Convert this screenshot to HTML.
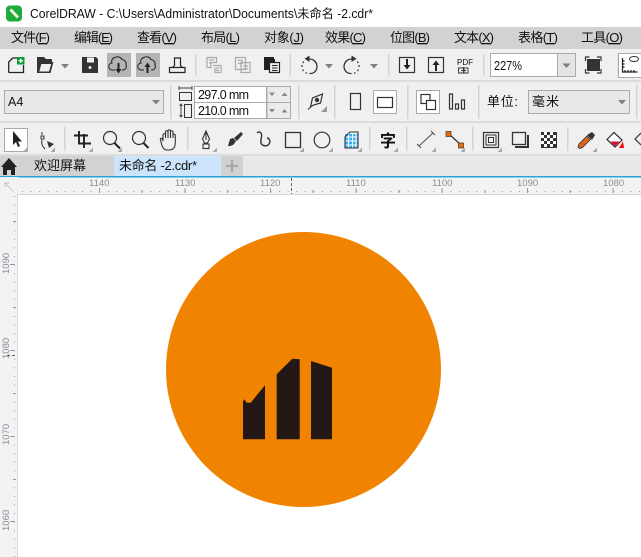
<!DOCTYPE html>
<html><head><meta charset="utf-8"><style>
html,body{margin:0;padding:0;background:#fff;width:641px;height:557px;overflow:hidden}
svg{display:block;position:absolute;left:0;top:0}
text{font-family:"Liberation Sans","Noto Sans CJK SC",sans-serif;fill:#111}
.m{font-size:13px}
.r{font-size:9.5px;fill:#8d8d8d}
.rv{font-size:9.5px;fill:#8a8a9c}
.i{fill:none;stroke:#333;stroke-width:1.3}
.g{fill:none;stroke:#aaa;stroke-width:1.2}
.sep{fill:#d4d4d4}
.tri{fill:#808080}
.c{fill:#a8a8a8}
</style></head><body>
<svg width="641" height="557" viewBox="0 0 641 557" xmlns="http://www.w3.org/2000/svg">
<rect width="641" height="557" fill="#fff"/>
<!-- title -->
<rect x="6" y="5.500" width="16" height="16" rx="4" fill="#1faa3c"/>
<path d="M10.500 9.500l7.500 8" stroke="#e8f5e0" stroke-width="3"/>
<text x="30" y="18" font-size="12.500" textLength="343" lengthAdjust="spacingAndGlyphs">CorelDRAW - C:\Users\Administrator\Documents\未命名 -2.cdr*</text>
<!-- menu -->
<rect y="27" width="641" height="22" fill="#d2d2d2"/>
<g class="m">
<text class="m" x="11" y="42" textLength="39">文件(<tspan text-decoration="underline">F</tspan>)</text>
<text class="m" x="74" y="42" textLength="39">编辑(<tspan text-decoration="underline">E</tspan>)</text>
<text class="m" x="137" y="42" textLength="40">查看(<tspan text-decoration="underline">V</tspan>)</text>
<text class="m" x="201" y="42" textLength="39">布局(<tspan text-decoration="underline">L</tspan>)</text>
<text class="m" x="264" y="42" textLength="40">对象(<tspan text-decoration="underline">J</tspan>)</text>
<text class="m" x="325" y="42" textLength="41">效果(<tspan text-decoration="underline">C</tspan>)</text>
<text class="m" x="390" y="42" textLength="40">位图(<tspan text-decoration="underline">B</tspan>)</text>
<text class="m" x="454" y="42" textLength="40">文本(<tspan text-decoration="underline">X</tspan>)</text>
<text class="m" x="518" y="42" textLength="40">表格(<tspan text-decoration="underline">T</tspan>)</text>
<text class="m" x="581" y="42" textLength="42">工具(<tspan text-decoration="underline">O</tspan>)</text>
</g>
<!-- toolbars bg -->
<rect y="49" width="641" height="106" fill="#f0f0f0"/>
<rect y="80" width="641" height="2" fill="#dcdcdc"/>
<rect y="121" width="641" height="2" fill="#dcdcdc"/>
<rect y="154" width="641" height="2" fill="#dcdcdc"/>
<!-- toolbar1 -->
<path class="i" d="M8.700 72.500V62l4-4h5M23.500 65v7.500H8.700" style="stroke:#222"/>
<rect x="17" y="57" width="7.500" height="7.500" fill="#0a9a3a"/><path d="M20.700 58.500v4.500M18.500 60.700h4.500" stroke="#fff" stroke-width="1.300"/>
<path fill-rule="evenodd" d="M37 57h7l2 2h6v3h1.500l-3 11H37zM41.300 64l-2 7.500h9.700l2.200-7.500z" fill="#333"/>
<path class="tri" d="M61 64h8l-4 4.500z"/>
<path d="M82 57h14l2 2v14H82z" fill="#333"/><rect x="87" y="57.500" width="7" height="5" fill="#f0f0f0"/><rect x="88.500" y="66" width="3" height="3" rx="1.500" fill="#f0f0f0"/>
<rect x="107" y="53" width="24" height="24" fill="#b4b4b4"/>
<rect x="136" y="53" width="24" height="24" fill="#b4b4b4"/>
<path d="M115 70h-2.500a3.500 3.500 0 0 1-.5-7 4 4 0 0 1 3-5.500 5 5 0 0 1 7 2 4.500 4.500 0 0 1 4 5.500 3.500 3.500 0 0 1-3.500 5H122" fill="none" stroke="#222" stroke-width="1"/>
<path d="M118.500 63v7" stroke="#222" stroke-width="2"/><path d="M115.500 69h6l-3 4.500z" fill="#222"/>
<path d="M144 70h-2.500a3.500 3.500 0 0 1-.5-7 4 4 0 0 1 3-5.500 5 5 0 0 1 7 2 4.500 4.500 0 0 1 4 5.500 3.500 3.500 0 0 1-3.500 5H151" fill="none" stroke="#222" stroke-width="1"/>
<path d="M147.500 73v-7" stroke="#222" stroke-width="2"/><path d="M144.500 67h6l-3-4.500z" fill="#222"/>
<path d="M169.500 72.500v-5h3l2-2V58h6v7.500l2 2h2.500v5zM172 67.500h11" fill="none" stroke="#222" stroke-width="1.200"/>
<rect x="195" y="54" width="1.500" height="22" class="sep"/>
<path class="g" d="M207 57.500h9.500v5H211v5h-4zM209 60h5M209 63h1.500M213 65.500h8v7h-6v-5M216 68h3M216 70.500h3"/>
<path class="g" d="M235.500 57.500h10v12h-10zM238 60.500h5M238 63.500h5M241 62.500h9v10h-9zM243 66h5M243 69h5"/>
<path d="M264 57h10v2h1v3h-6v8h-5z" fill="#222"/><path d="M269.500 62.500h10v10h-10z" fill="#f0f0f0" stroke="#222" stroke-width="1.200"/><path d="M272 65.500h5.500M272 68h5.500M272 70.500h5.500" stroke="#222"/>
<rect x="289.500" y="54" width="1.500" height="22" class="sep"/>
<!-- undo -->
<path d="M309 59a7.500 7.500 0 0 1 5 13.500 7.500 7.500 0 0 1-4.500 1" fill="none" stroke="#333" stroke-width="1.300"/>
<path d="M307 73.300l-1.500-.6M303.500 71l-1-1.500M302 67v-2M302.800 63l1-1.500" fill="none" stroke="#333" stroke-width="1.200"/>
<path d="M309.500 55.500v6.500l-5-3.300z" fill="#333"/>
<path class="tri" d="M325 64h8l-4 4.500z"/>
<!-- redo -->
<path d="M352 59a7.500 7.500 0 0 0-5 13.500 7.500 7.500 0 0 0 4.500 1" fill="none" stroke="#333" stroke-width="1.300"/>
<path d="M354 73.300l1.500-.6M357.500 71l1-1.500M359 67v-2M358.200 63l-1-1.500" fill="none" stroke="#333" stroke-width="1.200"/>
<path d="M351.500 55.500v6.500l5-3.300z" fill="#333"/>
<path class="tri" d="M370 64h8l-4 4.500z"/>
<rect x="388" y="54" width="1.500" height="22" class="sep"/>
<rect x="399.500" y="57.500" width="15" height="15" fill="none" stroke="#333" stroke-width="1.200"/><path d="M407 59v7" stroke="#222" stroke-width="2"/><path d="M403.500 65h7l-3.500 4.500z" fill="#222"/>
<rect x="428.500" y="57.500" width="15" height="15" fill="none" stroke="#333" stroke-width="1.200"/><path d="M436 64v7" stroke="#222" stroke-width="2"/><path d="M432.500 65h7L436 60.500z" fill="#222"/>
<text x="457" y="65" font-size="8" textLength="16">PDF</text>
<path d="M458.500 68h5v5h-5zM464 68h4v5h-4zM461 70.500h5M463.500 67v6" fill="none" stroke="#333" stroke-width=".9"/>
<rect x="483" y="54" width="1.500" height="22" class="sep"/>
<rect x="490.500" y="53.500" width="85" height="23" fill="#fff" stroke="#aaa"/>
<rect x="558" y="54" width="17" height="22" fill="#e4e4e4"/><rect x="557" y="54" width="1" height="22" fill="#aaa"/>
<path class="tri" d="M562.500 63.500h8l-4 4.500z"/>
<text x="494" y="70" font-size="12.500" textLength="28" lengthAdjust="spacingAndGlyphs">227%</text>
<rect x="587" y="59" width="13" height="12" fill="#333"/>
<path d="M585.500 61v-4h4M597 57h4v4M601 69v4h-4M589.500 73h-4v-4" fill="none" stroke="#333" stroke-width="1.200"/>
<rect x="617.500" y="54" width="1.500" height="22" class="sep"/>
<rect x="618.500" y="53.500" width="30" height="24" fill="#fff" stroke="#aaa"/>
<path d="M622.500 58v14h15M625 72v-2M628 72v-2M631 72v-2M634 72v-2M622.500 61h2M622.500 64h2M622.500 67h2" fill="none" stroke="#222" stroke-width="1.200"/>
<ellipse cx="634" cy="59" rx="4.500" ry="2.500" fill="none" stroke="#333"/>
<!-- toolbar2 -->
<rect x="4.500" y="90.500" width="159" height="23" fill="#e8e8e8" stroke="#aaa"/>
<text x="8" y="106" font-size="12.500">A4</text>
<path class="tri" d="M152 100h8l-4 4.500z"/>
<rect x="170" y="85" width="1.500" height="34" class="sep"/>
<path d="M179 88h13M179 86v4M192 86v4" stroke="#444" fill="none"/><rect x="179.500" y="92.500" width="12" height="8" fill="none" stroke="#333"/>
<path d="M181 104v13M179.500 106l1.500-2 1.500 2M179.500 115l1.500 2 1.500-2" stroke="#444" fill="none"/><rect x="184.500" y="104.500" width="7" height="13" fill="none" stroke="#333"/>
<rect x="194.500" y="86.500" width="72" height="32" fill="#fff" stroke="#aaa"/>
<rect x="194" y="102" width="73" height="1" fill="#aaa"/>
<rect x="267" y="86.500" width="23.500" height="32" fill="#ececec" stroke="#aaa"/>
<rect x="267" y="102" width="24" height="1" fill="#aaa"/>
<text x="198" y="99" font-size="12.500" textLength="51">297.0 mm</text>
<text x="198" y="115" font-size="12.500" textLength="51">210.0 mm</text>
<g fill="#888"><path d="M269 92.500h6l-3 3.500zM281.500 96h6l-3-3.500zM269 109h6l-3 3.500zM281.500 112.500h6l-3-3.500z"/></g>
<rect x="298" y="85" width="1.500" height="34" class="sep"/>
<path d="M310.500 107l2-9 10-4-2 9-7 2z" fill="none" stroke="#333" stroke-width="1.200"/><circle cx="317" cy="100" r="2.200" fill="#333"/><path d="M308 109.500l3-3" stroke="#333"/>
<path d="M321 112h6v-6z" fill="#999"/>
<rect x="334" y="85" width="1.500" height="34" class="sep"/>
<rect x="350.500" y="93.500" width="10" height="16" fill="none" stroke="#333" stroke-width="1.200"/>
<rect x="373.500" y="90.500" width="23" height="23" fill="#fff" stroke="#aaa"/>
<rect x="377.500" y="97.500" width="15" height="10" fill="none" stroke="#333" stroke-width="1.200"/>
<rect x="407" y="85" width="1.500" height="34" class="sep"/>
<rect x="416.500" y="90.500" width="23" height="23" fill="#fff" stroke="#aaa"/>
<rect x="421" y="94.500" width="9" height="9" fill="none" stroke="#333" stroke-width="1.200"/>
<rect x="426.500" y="100.500" width="9" height="9" fill="#fff" stroke="#333" stroke-width="1.200"/>
<path d="M449.500 94h3v15h-3zM455.500 104h3v5h-3zM461.500 100h3v9h-3z" fill="none" stroke="#333" stroke-width="1.200"/>
<rect x="478" y="85" width="1.500" height="34" class="sep"/>
<text x="487" y="106" font-size="13" textLength="31">单位:</text>
<rect x="528.500" y="90.500" width="101" height="23" fill="#e8e8e8" stroke="#aaa"/>
<text x="532" y="106" font-size="13" textLength="27">毫米</text>
<path class="tri" d="M618 100h8l-4 4.500z"/>
<rect x="636" y="85" width="1.500" height="34" class="sep"/>
<!-- toolbar3 -->
<rect x="4.500" y="128.500" width="23" height="23" fill="#fff" stroke="#aaa"/>
<path d="M13 131v14l3-3 2 5 2-1-2-4.500h4z" fill="#222"/>
<path d="M42 132v3M41 136h3v3h-3zM42 140c-1 3 0 6 3 9" fill="none" stroke="#333"/>
<path d="M47 141l7 3-5 4z" fill="#333"/>
<rect x="64" y="127" width="1.500" height="24" class="sep"/>
<path d="M74 135.500h14M79 131v12.500h12M84 134v14" fill="none" stroke="#222" stroke-width="1.900"/>
<circle cx="110" cy="138" r="6.500" fill="none" stroke="#333" stroke-width="1.200"/><path d="M114.500 143l5.500 5.500" stroke="#222" stroke-width="2"/>
<circle cx="139" cy="138" r="6.500" fill="none" stroke="#333" stroke-width="1.200"/><path d="M143.500 143l5 5" stroke="#222" stroke-width="2"/>
<path d="M163 141v-6a1.200 1.200 0 0 1 2.500 0v3-6a1.200 1.200 0 0 1 2.500 0v6-7a1.200 1.200 0 0 1 2.500 0v7-6a1.200 1.200 0 0 1 2.500 0v6-3a1.200 1.200 0 0 1 2.300 0v8c0 5-3 7-6 7h-2c-3 0-5-2-6-7l-1-4c0-1 2-1 2 0z" fill="none" stroke="#333" stroke-width="1.100"/>
<rect x="187" y="127" width="1.500" height="24" class="sep"/>
<path d="M206 131l-3.500 8 2 4h3l2-4zM206 131v9" fill="none" stroke="#333" stroke-width="1.100"/><rect x="203" y="144" width="6" height="4.500" fill="none" stroke="#333" stroke-width="1.100"/>
<path d="M228 146l2-7 3-1 3 3-2 3c-2 2-4 2-6 2z" fill="#333"/><path d="M234 138l7-6 2 2-6 7z" fill="#333"/>
<path d="M257 133a2.500 2.500 0 0 1 4 0c2 3-1 6 0 10 1 3 6 4 8 1 2-3 0-6-2-6" fill="none" stroke="#333" stroke-width="1.400"/>
<rect x="285.500" y="132.500" width="15" height="15" fill="none" stroke="#333" stroke-width="1.300"/>
<circle cx="322" cy="140" r="7.800" fill="none" stroke="#333" stroke-width="1.200"/>
<path d="M345 134h9l4 0v14h-13z" fill="#37aef0"/><path d="M345 137h13M345 141h13M345 145h13M348.500 133v15M352.500 133v15M356 133v15" stroke="#fff"/><path d="M345 148v-11l5-5h8v16z" fill="none" stroke="#333" stroke-width="1.100"/>
<rect x="369" y="127" width="1.500" height="24" class="sep"/>
<text x="380" y="147" font-size="17" font-weight="700" textLength="16" lengthAdjust="spacingAndGlyphs">字</text>
<rect x="406" y="127" width="1.500" height="24" class="sep"/>
<path d="M419 146l14-13M417 144l4 4M431 131l4 4" fill="none" stroke="#555" stroke-width="1.100"/>
<path d="M449 134l12 11" stroke="#333" stroke-width="1.200"/><rect x="446" y="131.500" width="5" height="5" fill="#f06a00" stroke="#333" stroke-width=".7"/><rect x="458.500" y="143" width="5" height="5" fill="#f06a00" stroke="#333" stroke-width=".7"/>
<rect x="472" y="127" width="1.500" height="24" class="sep"/>
<rect x="483.500" y="132.500" width="15" height="15" fill="none" stroke="#333" stroke-width="1.200"/><rect x="486" y="135" width="10" height="10" fill="none" stroke="#333"/><rect x="488.500" y="137.500" width="5" height="5" fill="none" stroke="#333"/>
<rect x="512.500" y="132.500" width="13" height="12" fill="none" stroke="#333" stroke-width="1.300"/><path d="M528 135v12h-13" fill="none" stroke="#333" stroke-width="2"/>
<rect x="541" y="132" width="16" height="16" fill="#333"/>
<g fill="#fff"><rect x="544" y="132" width="3" height="3"/><rect x="550" y="132" width="3" height="3"/><rect x="541" y="135" width="3" height="3"/><rect x="547" y="135" width="3" height="3"/><rect x="553" y="135" width="3" height="3"/><rect x="544" y="138" width="3" height="3"/><rect x="550" y="138" width="3" height="3"/><rect x="541" y="141" width="3" height="3"/><rect x="547" y="141" width="3" height="3"/><rect x="553" y="141" width="3" height="3"/><rect x="544" y="144" width="3" height="3"/><rect x="550" y="144" width="3" height="3"/></g>
<rect x="567" y="127" width="1.500" height="24" class="sep"/>
<!-- eyedropper -->
<path d="M579.500 148.500l-1.500-1.500 1-3 8-8 3.500 3.500-8 8z" fill="#d9641e" stroke="#333" stroke-width=".8"/><path d="M587 135l5-3 3 3-3 5z" fill="#333"/>
<!-- fill -->
<path d="M615 147l-8-7.500 7-7 8 7.500z" fill="#fff" stroke="#333" stroke-width="1.200"/><path d="M610.500 141.500h9l-4.500 4.500z" fill="#e8002a"/><path d="M624 148h-5l4-6.500z" fill="#f00"/>
<path d="M641 133l-6 6 6 6" fill="none" stroke="#333" stroke-width="1.200"/>
<g class="c"><path d="M27 152h-4.500l4.500-4.500zM55 152h-4.500l4.500-4.500zM93 152h-4.500l4.500-4.500zM122 152h-4.500l4.500-4.500zM217 152h-4.500l4.500-4.500zM304 152h-4.500l4.500-4.500zM333 152h-4.500l4.500-4.500zM362 152h-4.500l4.500-4.500zM398 152h-4.500l4.500-4.500zM436 152h-4.500l4.500-4.500zM465 152h-4.500l4.500-4.500zM502 152h-4.500l4.500-4.500zM597 152h-4.500l4.500-4.500z"/></g>
<!-- tabs -->
<rect y="156" width="641" height="20" fill="#e9e9e9"/>
<rect x="0" y="156" width="114" height="20" fill="#d2d2d2"/>
<path d="M1 167l8-9 8 9h-2v8h-4v-5H7v5H3v-8z" fill="#222"/>
<text x="34" y="170" font-size="13" textLength="52">欢迎屏幕</text>
<rect x="114" y="156" width="107" height="20" fill="#cce4fc"/>
<text x="119" y="170" font-size="13" textLength="78">未命名 -2.cdr*</text>
<rect x="221" y="156" width="22" height="20" fill="#d2d2d2"/>
<path d="M232 160v12M226 166h12" stroke="#a8a8a8" stroke-width="2.200"/>
<rect y="176" width="641" height="1.500" fill="#29a3e0"/>
<!-- rulers -->
<rect y="177.500" width="641" height="17" fill="#f3f3f3"/>
<rect y="177" width="18" height="380" fill="#f3f3f3"/>
<rect x="17" y="194" width="624" height="1" fill="#d6d6d6"/>
<rect x="17" y="194" width="1" height="363" fill="#d6d6d6"/>
<path d="M5 183h4M5 183v4M5 183l8 8" stroke="#aaa" fill="none" stroke-dasharray="1.500 1"/>
<text class="r" x="89" y="186">1140</text>
<text class="r" x="175" y="186">1130</text>
<text class="r" x="260" y="186">1120</text>
<text class="r" x="346" y="186">1110</text>
<text class="r" x="432" y="186">1100</text>
<text class="r" x="517" y="186">1090</text>
<text class="r" x="603" y="186">1080</text>
<path d="M99.500 188v5M185 188v5M270.500 188v5M356 188v5M442 188v5M527.500 188v5M613 188v5M142 190v3M227.500 190v3M313 190v3M399 190v3M485 190v3M570 190v3" stroke="#9a9a9a"/>
<path d="M22 191.500H641" stroke="#9a9a9a" stroke-dasharray="1 7.570"/>
<path d="M291.500 178v16" stroke="#666" stroke-dasharray="3 2"/>
<g transform="rotate(-90)">
<text class="rv" x="-274" y="9">1090</text>
<text class="rv" x="-359" y="9">1080</text>
<text class="rv" x="-445" y="9">1070</text>
<text class="rv" x="-531" y="9">1060</text>
</g>
<path d="M10 264.500h5M10 350.500h5M10 436.500h5M10 521.500h5M13 221.500h3M13 307.500h3M13 393.500h3M13 479.500h3" stroke="#9a9a9a"/>
<path d="M14.500 196V557" stroke="#9a9a9a" stroke-dasharray="1 7.570"/>
<path d="M7 355.500h10" stroke="#666" stroke-dasharray="3 2"/>
<!-- art -->
<circle cx="303.500" cy="369.500" r="137.500" fill="#f08300"/>
<g fill="#231815">
<path d="M243 439.300V401.700L244.300 399.300 246.700 402.700H250.700L265 385.300V439.300z"/>
<path d="M276.700 439.300V374.300L292.300 358.700 299.700 359.300V439.300z"/>
<path d="M311 439.300V361L332 367.700V439.300z"/>
</g>
</svg>
</body></html>
